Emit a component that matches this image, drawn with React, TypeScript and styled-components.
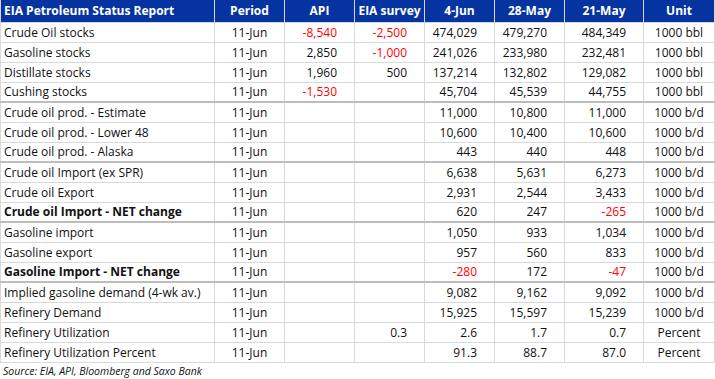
import React from "react";
import styled, { createGlobalStyle } from "styled-components";

const Global = createGlobalStyle`
  html, body { margin: 0; padding: 0; background: #ffffff; }
  body { font-family: "Open Sans", "Liberation Sans", sans-serif; color: #000; }
`;

const Wrap = styled.div`
  width: 715px;
  display: flex;
  flex-direction: column;
`;

const Table = styled.table`
  width: 714px;
  border-collapse: collapse;
  table-layout: fixed;
  font-size: 12px;
`;

const HeadCell = styled.th<{ $left?: boolean }>`
  background: #0534a0;
  color: #ffffff;
  font-weight: 700;
  height: 22px;
  padding: 0 0 0 ${(p) => (p.$left ? "3px" : "0")};
  text-align: ${(p) => (p.$left ? "left" : "center")};
  border: 1px solid #d6d6d6;
  border-top: none;
  white-space: nowrap;
  line-height: 20px;
`;

const Row = styled.tr<{ $thick?: boolean }>`
  & > td {
    height: ${(p) => (p.$thick ? "18px" : "19px")};
    border-bottom: ${(p) => (p.$thick ? "2px solid #bdbdbd" : "1px solid #d9d9d9")};
  }
`;

const Cell = styled.td<{ $align: "left" | "center" | "right"; $red?: boolean; $bold?: boolean }>`
  padding: 0 ${(p) => (p.$align === "right" ? "17px" : "0")} 0 ${(p) => (p.$align === "left" ? "3px" : "0")};
  text-align: ${(p) => p.$align};
  color: ${(p) => (p.$red ? "#ff0000" : "#111111")};
  font-weight: ${(p) => (p.$bold ? 700 : 400)};
  border-left: 1px solid #d9d9d9;
  border-right: 1px solid #d9d9d9;
  white-space: nowrap;
  line-height: 18px;
`;

const Source = styled.div`
  font-size: 10.5px;
  font-style: italic;
  padding: 1px 0 0 3px;
  line-height: 15px;
  color: #111;
`;

type R = {
  name: string;
  api?: string;
  eia?: string;
  v: [string, string, string];
  unit: string;
  bold?: boolean;
  thick?: boolean;
};

const rows: R[] = [
  { name: "Crude Oil stocks", api: "-8,540", eia: "-2,500", v: ["474,029", "479,270", "484,349"], unit: "1000 bbl" },
  { name: "Gasoline stocks", api: "2,850", eia: "-1,000", v: ["241,026", "233,980", "232,481"], unit: "1000 bbl" },
  { name: "Distillate stocks", api: "1,960", eia: "500", v: ["137,214", "132,802", "129,082"], unit: "1000 bbl" },
  { name: "Cushing stocks", api: "-1,530", v: ["45,704", "45,539", "44,755"], unit: "1000 bbl", thick: true },
  { name: "Crude oil prod. - Estimate", v: ["11,000", "10,800", "11,000"], unit: "1000 b/d" },
  { name: "Crude oil prod. - Lower 48", v: ["10,600", "10,400", "10,600"], unit: "1000 b/d" },
  { name: "Crude oil prod. - Alaska", v: ["443", "440", "448"], unit: "1000 b/d", thick: true },
  { name: "Crude oil Import (ex SPR)", v: ["6,638", "5,631", "6,273"], unit: "1000 b/d" },
  { name: "Crude oil Export", v: ["2,931", "2,544", "3,433"], unit: "1000 b/d" },
  { name: "Crude oil Import - NET change", v: ["620", "247", "-265"], unit: "1000 b/d", bold: true, thick: true },
  { name: "Gasoline import", v: ["1,050", "933", "1,034"], unit: "1000 b/d" },
  { name: "Gasoline export", v: ["957", "560", "833"], unit: "1000 b/d" },
  { name: "Gasoline Import - NET change", v: ["-280", "172", "-47"], unit: "1000 b/d", bold: true, thick: true },
  { name: "Implied gasoline demand (4-wk av.)", v: ["9,082", "9,162", "9,092"], unit: "1000 b/d" },
  { name: "Refinery Demand", v: ["15,925", "15,597", "15,239"], unit: "1000 b/d" },
  { name: "Refinery Utilization", eia: "0.3", v: ["2.6", "1.7", "0.7"], unit: "Percent" },
  { name: "Refinery Utilization Percent", v: ["91.3", "88.7", "87.0"], unit: "Percent" },
];

const widths = [214, 70, 70, 70, 70, 70, 79, 71];
const heads = ["EIA Petroleum Status Report", "Period", "API", "EIA survey", "4-Jun", "28-May", "21-May", "Unit"];

const isNeg = (s?: string) => !!s && s.startsWith("-");

export default function App() {
  return (
    <Wrap>
      <Global />
      <Table>
        <colgroup>
          {widths.map((w, i) => (
            <col key={i} style={{ width: w }} />
          ))}
        </colgroup>
        <thead>
          <tr>
            {heads.map((h, i) => (
              <HeadCell key={h} $left={i === 0}>
                {h}
              </HeadCell>
            ))}
          </tr>
        </thead>
        <tbody>
          {rows.map((r) => (
            <Row key={r.name} $thick={r.thick}>
              <Cell $align="left" $bold={r.bold}>{r.name}</Cell>
              <Cell $align="center">11-Jun</Cell>
              <Cell $align="right" $red={isNeg(r.api)}>{r.api ?? ""}</Cell>
              <Cell $align="right" $red={isNeg(r.eia)}>{r.eia ?? ""}</Cell>
              {r.v.map((x, i) => (
                <Cell key={i} $align="right" $red={isNeg(x)}>{x}</Cell>
              ))}
              <Cell $align="center">{r.unit}</Cell>
            </Row>
          ))}
        </tbody>
      </Table>
      <Source>Source: EIA, API, Bloomberg and Saxo Bank</Source>
    </Wrap>
  );
}
